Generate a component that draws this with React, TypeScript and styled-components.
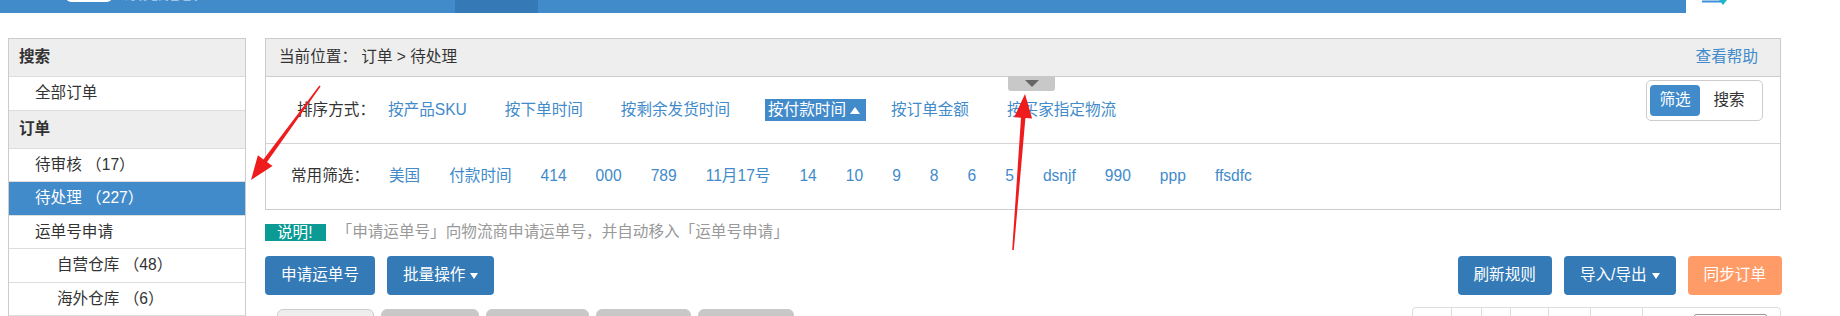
import React from 'react';
import styled, { createGlobalStyle, css } from 'styled-components';

const GlobalStyle = createGlobalStyle`
  html, body {
    margin: 0;
    padding: 0;
    background: #fff;
  }
  body {
    font-family: "Liberation Sans", "Noto Sans CJK SC", sans-serif;
    font-size: 15.6px;
    line-height: 1.3;
    color: #333;
    overflow: hidden;
  }
  * {
    box-sizing: border-box;
  }
`;

const Page = styled.div`
  position: relative;
  width: 1840px;
  height: 316px;
  overflow: hidden;
`;

/* ---------- top bar ---------- */

const TopRow = styled.div`
  display: flex;
  height: 13px;
`;

const TopBar = styled.div`
  width: 1686px;
  height: 13px;
  background: #428bca;
  display: flex;
  align-items: flex-start;
  overflow: hidden;
`;

const Logo = styled.div`
  width: 46px;
  height: 24px;
  margin: -22px 0 0 66px;
  background: #fff;
  border-radius: 5px;
`;

const Brand = styled.div`
  width: 76px;
  margin: -10px 0 0 13px;
  font-size: 11px;
  line-height: 12px;
  white-space: nowrap;
  overflow: hidden;
  color: rgba(255, 255, 255, 0.6);
`;

const NavActive = styled.div`
  width: 83px;
  height: 13px;
  margin-left: 254px;
  background: #357ab7;
`;

const ExitIcon = styled.svg`
  margin-left: 16px;
  display: block;
`;

/* ---------- body ---------- */

const Body = styled.div`
  display: flex;
  gap: 19px;
  padding: 25px 0 0 8px;
`;

const Sidebar = styled.div`
  width: 238px;
  flex: none;
  border: 1px solid #ccc;
  border-bottom: none;
`;

const SideHead = styled.div`
  height: 38px;
  display: flex;
  align-items: center;
  padding-left: 10px;
  background: #eee;
  border-bottom: 1px solid #ddd;
  font-weight: bold;
  color: #333;
`;

const SideItem = styled.div<{ $indent?: number; $active?: boolean }>`
  height: 33.5px;
  display: flex;
  align-items: center;
  padding-left: ${(p) => p.$indent ?? 26}px;
  border-bottom: 1px solid #ddd;
  color: #333;
  white-space: pre;
  ${(p) =>
    p.$active &&
    css`
      background: #428bca;
      color: #fff;
    `}
`;

const Main = styled.div`
  width: 1516px;
  flex: none;
  display: flex;
  flex-direction: column;
`;

const Panel = styled.div`
  border: 1px solid #ccc;
`;

const PanelHead = styled.div`
  height: 38px;
  display: flex;
  align-items: center;
  justify-content: space-between;
  padding: 0 22px 0 13px;
  background: #eee;
  border-bottom: 1px solid #ccc;
`;

const HelpLink = styled.a`
  color: #428bca;
  text-decoration: none;
`;

const SortSection = styled.div`
  position: relative;
  height: 67px;
  display: flex;
  align-items: center;
  padding-left: 31px;
  border-bottom: 1px solid #d4d4d4;
`;

const FilterSection = styled.div`
  height: 65px;
  display: flex;
  align-items: center;
  padding-left: 25px;
`;

const RowLabel = styled.span<{ $gap: number }>`
  color: #333;
  margin-right: ${(p) => p.$gap}px;
  white-space: nowrap;
`;

const SortLink = styled.span<{ $active?: boolean }>`
  color: #428bca;
  white-space: nowrap;
  margin-right: 38px;
  display: inline-flex;
  align-items: center;
  height: 22px;
  ${(p) =>
    p.$active &&
    css`
      background: #428bca;
      color: #fff;
      padding: 0 6px 0 3px;
      margin-left: -3px;
      margin-right: 25px;
    `}
`;

const UpArrow = styled.i`
  width: 0;
  height: 0;
  margin-left: 4px;
  border-left: 5px solid transparent;
  border-right: 5px solid transparent;
  border-bottom: 7px solid #fff;
`;

const FilterLink = styled.span`
  color: #428bca;
  white-space: nowrap;
  margin-right: 29px;
`;

const CollapseTab = styled.div`
  position: absolute;
  left: 742px;
  top: -1px;
  width: 47px;
  height: 15px;
  background: #c8c8c8;
  border-radius: 0 0 3px 3px;
  display: flex;
  align-items: center;
  justify-content: center;

  &::after {
    content: '';
    border-left: 7px solid transparent;
    border-right: 7px solid transparent;
    border-top: 7px solid #666;
  }
`;

const ToggleGroup = styled.div`
  margin: 3px 17px 0 auto;
  align-self: flex-start;
  display: flex;
  padding: 4px 4px 4px 3px;
  border: 1px solid #ccc;
  border-radius: 5px;
`;

const ToggleBtn = styled.span<{ $on?: boolean; $w: number }>`
  width: ${(p) => p.$w}px;
  height: 31px;
  display: flex;
  align-items: center;
  justify-content: center;
  border-radius: 4px;
  color: #333;
  ${(p) =>
    p.$on &&
    css`
      background: #428bca;
      color: #fff;
    `}
`;

const NoteRow = styled.div`
  margin-top: 14px;
  display: flex;
  align-items: center;
  height: 17px;
`;

const NoteTag = styled.span`
  height: 17px;
  line-height: 17px;
  padding: 0 13px 0 12px;
  background: #0b9a94;
  color: #fff;
`;

const NoteText = styled.span`
  margin-left: 11px;
  color: #999;
  white-space: nowrap;
`;

const ButtonRow = styled.div`
  margin-top: 15px;
  display: flex;
  justify-content: space-between;
  width: 1517px;
`;

const BtnGroup = styled.div`
  display: flex;
  gap: 12px;
`;

const Btn = styled.button<{ $tone?: 'blue' | 'orange' }>`
  height: 39px;
  padding: 0 16px;
  border: none;
  border-radius: 4px;
  font: inherit;
  color: #fff;
  display: flex;
  align-items: center;
  background: ${(p) => (p.$tone === 'orange' ? '#ff9b66' : '#337ab7')};
`;

const Caret = styled.i`
  width: 0;
  height: 0;
  margin-left: 5px;
  border-left: 4.5px solid transparent;
  border-right: 4.5px solid transparent;
  border-top: 6px solid #fff;
`;

const BottomRow = styled.div`
  margin-top: 12px;
  display: flex;
  justify-content: space-between;
  align-items: flex-start;
`;

const Tabs = styled.div`
  display: flex;
  gap: 7px;
  margin: 2px 0 0 12px;
`;

const Tab = styled.div<{ $w: number; $active?: boolean }>`
  width: ${(p) => p.$w}px;
  height: 30px;
  border-radius: 6px 6px 0 0;
  background: ${(p) => (p.$active ? '#eee' : '#c8c8c8')};
  border: 1px solid ${(p) => (p.$active ? '#ccc' : '#c8c8c8')};
`;

const Pager = styled.div`
  width: 369px;
  height: 30px;
  display: flex;
  border: 1px solid #ddd;
  border-radius: 4px;
`;

const PagerCell = styled.div<{ $w?: number }>`
  width: ${(p) => (p.$w ? `${p.$w}px` : 'auto')};
  flex: ${(p) => (p.$w ? 'none' : '1')};
  border-right: ${(p) => (p.$w ? '1px solid #ddd' : 'none')};
`;

const PagerSelect = styled.div`
  width: 73px;
  height: 26px;
  margin: 6px 0 0 51px;
  border: 1px solid #999;
  border-radius: 2px;
`;

const Overlay = styled.svg`
  position: absolute;
  left: 0;
  top: 0;
  pointer-events: none;
`;

const sortItems = ['按产品SKU', '按下单时间', '按剩余发货时间', '按付款时间', '按订单金额', '按买家指定物流'];
const filterItems = ['美国', '付款时间', '414', '000', '789', '11月17号', '14', '10', '9', '8', '6', '5', 'dsnjf', '990', 'ppp', 'ffsdfc'];
const tabWidths = [97, 98, 103, 95, 96];
const pagerWidths = [39, 30, 29, 38, 42, 52];

export default function App() {
  return (
    <Page>
      <GlobalStyle />
      <TopRow>
        <TopBar>
          <Logo />
          <Brand>跨境电商管理系统 ERP</Brand>
          <NavActive />
        </TopBar>
        <ExitIcon width="26" height="6" viewBox="0 0 26 6">
          <line x1="0" y1="1.5" x2="21" y2="1.5" stroke="#3d8fd9" strokeWidth="2" />
          <polygon points="17,0 25,0 21,5" fill="#1fb5c9" />
        </ExitIcon>
      </TopRow>

      <Body>
        <Sidebar>
          <SideHead>搜索</SideHead>
          <SideItem>全部订单</SideItem>
          <SideHead>订单</SideHead>
          <SideItem>待审核 （17）</SideItem>
          <SideItem $active>待处理 （227）</SideItem>
          <SideItem>运单号申请</SideItem>
          <SideItem $indent={48}>自营仓库 （48）</SideItem>
          <SideItem $indent={48}>海外仓库 （6）</SideItem>
        </Sidebar>

        <Main>
          <Panel>
            <PanelHead>
              <span>当前位置： 订单 &gt; 待处理</span>
              <HelpLink>查看帮助</HelpLink>
            </PanelHead>
            <SortSection>
              <CollapseTab />
              <RowLabel $gap={13}>排序方式：</RowLabel>
              {sortItems.map((s, i) => (
                <SortLink key={s} $active={i === 3}>
                  {s}
                  {i === 3 && <UpArrow />}
                </SortLink>
              ))}
              <ToggleGroup>
                <ToggleBtn $on $w={50}>筛选</ToggleBtn>
                <ToggleBtn $w={58}>搜索</ToggleBtn>
              </ToggleGroup>
            </SortSection>
            <FilterSection>
              <RowLabel $gap={20}>常用筛选：</RowLabel>
              {filterItems.map((f) => (
                <FilterLink key={f}>{f}</FilterLink>
              ))}
            </FilterSection>
          </Panel>

          <NoteRow>
            <NoteTag>说明!</NoteTag>
            <NoteText>「申请运单号」向物流商申请运单号，并自动移入「运单号申请」</NoteText>
          </NoteRow>

          <ButtonRow>
            <BtnGroup>
              <Btn>申请运单号</Btn>
              <Btn>
                批量操作
                <Caret />
              </Btn>
            </BtnGroup>
            <BtnGroup>
              <Btn>刷新规则</Btn>
              <Btn>
                导入/导出
                <Caret />
              </Btn>
              <Btn $tone="orange">同步订单</Btn>
            </BtnGroup>
          </ButtonRow>

          <BottomRow>
            <Tabs>
              {tabWidths.map((w, i) => (
                <Tab key={i} $w={w} $active={i === 0} />
              ))}
            </Tabs>
            <Pager>
              {pagerWidths.map((w, i) => (
                <PagerCell key={i} $w={w} />
              ))}
              <PagerCell>
                <PagerSelect />
              </PagerCell>
            </Pager>
          </BottomRow>
        </Main>
      </Body>

      <Overlay width="1840" height="316" viewBox="0 0 1840 316">
        <polygon
          points="320.6,86.5 267.0,162.0 272.5,166.0 251,180 257.9,155.3 263.4,159.4 319.4,85.5"
          fill="#ee1c1c"
        />
        <polygon
          points="1013.8,250.1 1025.4,118.1 1032.1,118.6 1025,94 1014.2,117.2 1021.0,117.8 1012.2,249.9"
          fill="#ee1c1c"
        />
      </Overlay>
    </Page>
  );
}
